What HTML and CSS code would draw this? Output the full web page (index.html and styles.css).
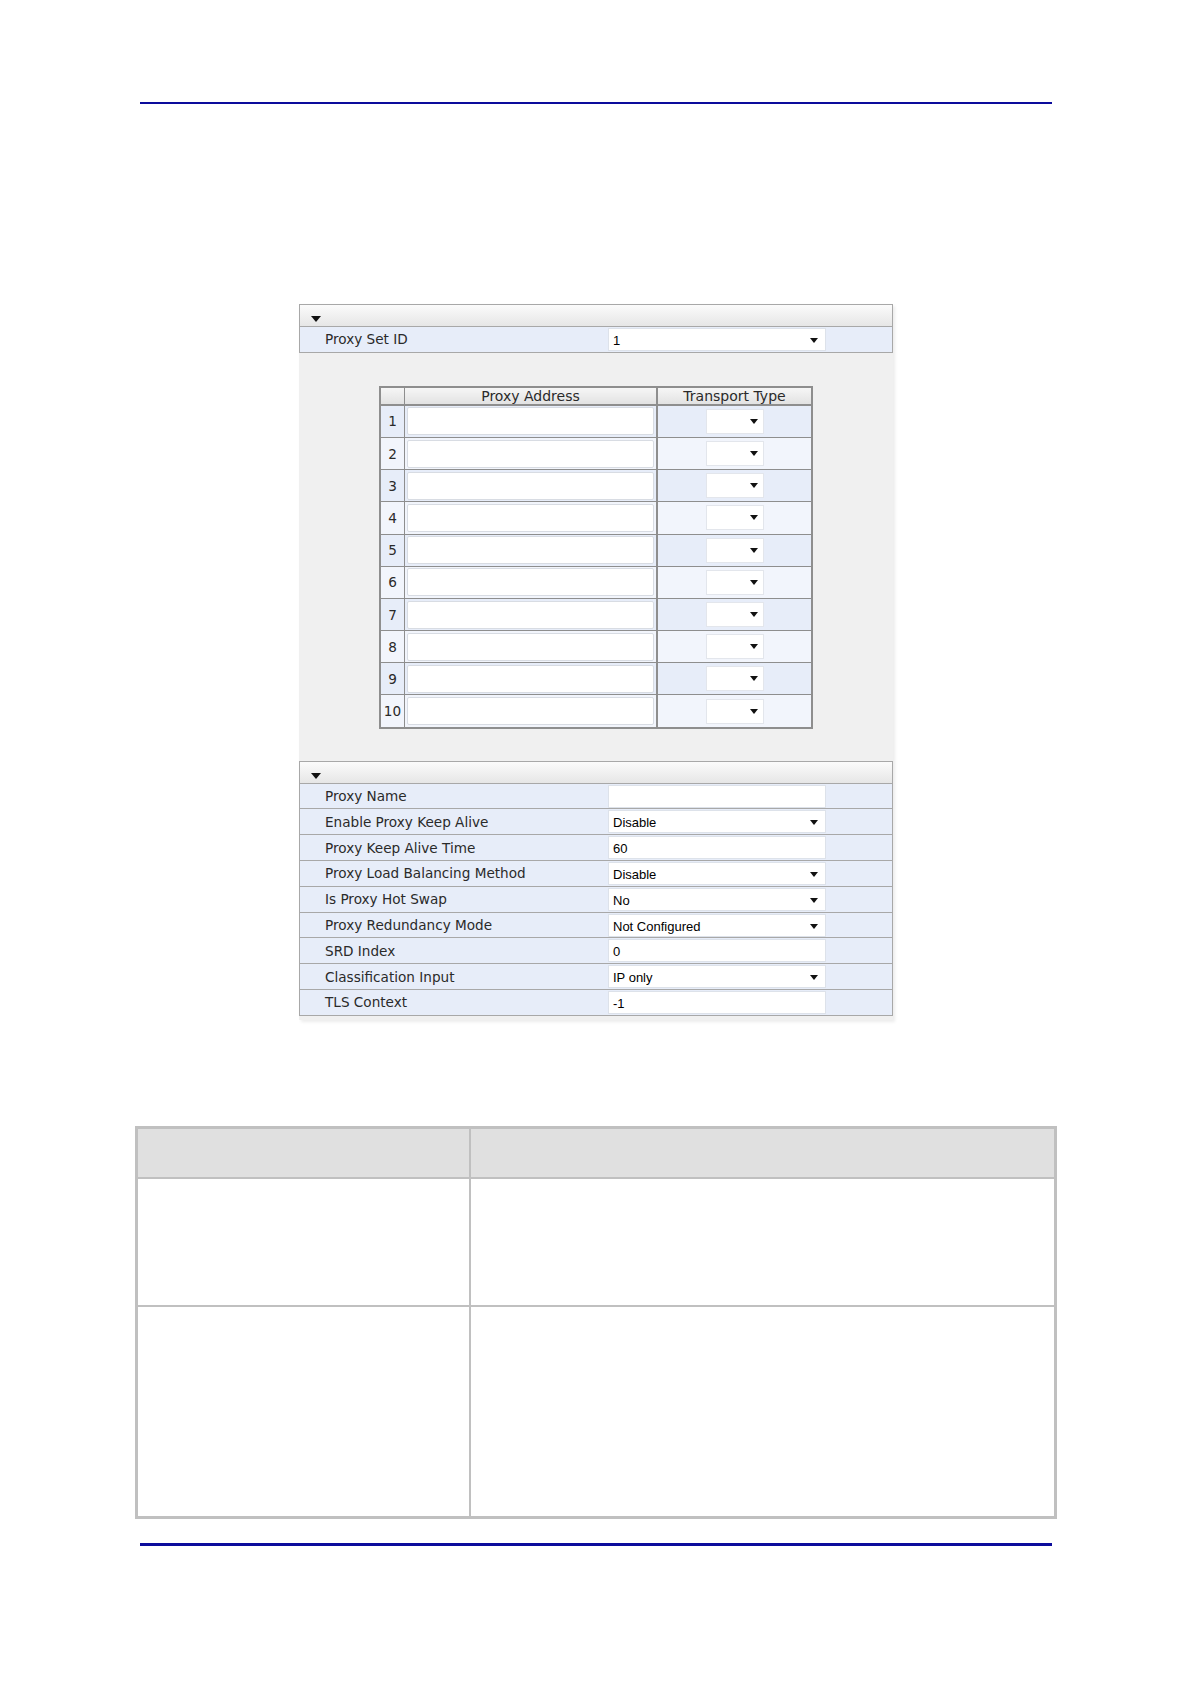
FILE: index.html
```html
<!DOCTYPE html>
<html lang="en">
  <head>
    <meta charset="UTF-8" />
    <title>Proxy Sets Table</title>
    <link rel="stylesheet" href="styles.css">
  </head>
  <body>
    <div class="page">
      <div class="rule-top"></div>

      <div class="form-area">
        <!-- Proxy set selector -->
        <div class="panel">
          <div class="panel-head"><span class="caret"></span></div>
          <div class="panel-row">
            <span class="label">Proxy Set ID</span>
            <span class="select">1<span class="arrow"></span></span>
          </div>
        </div>

        <div class="address-wrap">
          <table class="address-table">
            <thead>
              <tr>
                <th class="idx"></th>
                <th class="addr">Proxy Address</th>
                <th class="trans">Transport Type</th>
              </tr>
            </thead>
            <tbody id="addressRows"></tbody>
          </table>
        </div>

        <!-- Proxy set parameters -->
        <div class="panel">
          <div class="panel-head"><span class="caret"></span></div>
          <div class="panel-row"><span class="label">Proxy Name</span><span class="field"></span></div>
          <div class="panel-row"><span class="label">Enable Proxy Keep Alive</span><span class="select">Disable<span class="arrow"></span></span></div>
          <div class="panel-row"><span class="label">Proxy Keep Alive Time</span><span class="field">60</span></div>
          <div class="panel-row"><span class="label">Proxy Load Balancing Method</span><span class="select">Disable<span class="arrow"></span></span></div>
          <div class="panel-row"><span class="label">Is Proxy Hot Swap</span><span class="select">No<span class="arrow"></span></span></div>
          <div class="panel-row"><span class="label">Proxy Redundancy Mode</span><span class="select">Not Configured<span class="arrow"></span></span></div>
          <div class="panel-row"><span class="label">SRD Index</span><span class="field">0</span></div>
          <div class="panel-row"><span class="label">Classification Input</span><span class="select">IP only<span class="arrow"></span></span></div>
          <div class="panel-row"><span class="label">TLS Context</span><span class="field">-1</span></div>
        </div>
      </div>

      <table class="param-table">
        <tr class="param-head"><th class="col-a"></th><th></th></tr>
        <tr class="param-r1"><td></td><td></td></tr>
        <tr class="param-r2"><td></td><td></td></tr>
      </table>

      <div class="rule-bottom"></div>
    </div>

    <script>
      // build the 10 proxy address rows
      const rows = document.getElementById("addressRows");
      for (let i = 1; i <= 10; i++) {
        const tr = document.createElement("tr");
        tr.className = i % 2 === 1 ? "odd" : "even";
        tr.innerHTML =
          '<td class="idx">' + i + '</td>' +
          '<td class="addr"><span class="addr-input"></span></td>' +
          '<td class="trans"><span class="mini-select"><span class="arrow"></span></span></td>';
        rows.appendChild(tr);
      }
    </script>
  </body>
</html>
```

FILE: styles.css
```css
body {
  margin: 0;
  background-color: #ffffff;
  font-family: "DejaVu Sans", Verdana, sans-serif;
  color: #222;
}

.page {
  width: 1191px;
  padding-top: 102px;
  padding-bottom: 130px;
}

.rule-top {
  margin-left: 140px;
  width: 912px;
  border-top: 2px solid #0c0c9c;
}

.form-area {
  margin: 200px 0 0 299px;
  width: 594px;
  background-color: #f0f0f0;
  padding-bottom: 4px;
  box-shadow: 2px 2px 3px rgba(0, 0, 0, 0.08);
}

.panel {
  border: 1px solid #a8a8a8;
  background-color: #e7edf9;
}

.panel-head {
  height: 21px;
  background: linear-gradient(#fbfbfb, #e6e6e6);
  border-bottom: 1px solid #a8a8a8;
  position: relative;
}

.caret {
  position: absolute;
  left: 11px;
  top: 11px;
  border-left: 5px solid transparent;
  border-right: 5px solid transparent;
  border-top: 6px solid #111;
}

.panel-row {
  display: flex;
  align-items: center;
  height: 24.8px;
  border-bottom: 1px solid #a8a8a8;
}

.panel-row:last-child {
  border-bottom: none;
}

.label {
  width: 283px;
  padding-left: 25px;
  font-size: 13.6px;
  color: #2a2a2a;
}

.field,
.select {
  position: relative;
  box-sizing: border-box;
  width: 218px;
  height: 23px;
  line-height: 23px;
  padding-left: 4px;
  background-color: #fff;
  border: 1px solid #dde2ea;
  font-family: "Liberation Sans", Arial, sans-serif;
  font-size: 13px;
  color: #000;
}

.arrow {
  position: absolute;
  right: 7px;
  top: 9px;
  border-left: 4px solid transparent;
  border-right: 4px solid transparent;
  border-top: 5px solid #111;
}

.address-wrap {
  display: flex;
  justify-content: center;
  padding: 33px 0 32px;
}

.address-table {
  border-collapse: collapse;
  border: 2px solid #8e8e8e;
  font-size: 13.6px;
  color: #2a2a2a;
}

.address-table th {
  height: 15px;
  font-size: 14px;
  font-weight: normal;
  background: linear-gradient(#f6f6f6, #e2e2e2);
  border: 1px solid #8e8e8e;
  border-bottom: 2px solid #8e8e8e;
  padding: 0;
}

.address-table td {
  height: 31.2px;
  padding: 0;
  border-bottom: 1px solid #8e8e8e;
}

.address-table .idx {
  width: 23px;
  text-align: center;
  border-right: 1px solid #8e8e8e;
}

.address-table .addr {
  width: 251px;
  border-right: 2px solid #8e8e8e;
}

.address-table .trans {
  width: 153px;
  text-align: center;
}

.address-table tr.odd td {
  background-color: #e7edf9;
}

.address-table tr.even td {
  background-color: #f2f5fc;
}

.addr-input {
  display: block;
  height: 26px;
  margin: 0 2px;
  background-color: #fff;
  border: 1px solid #d8dce3;
  border-radius: 2px;
}

.mini-select {
  position: relative;
  display: inline-block;
  vertical-align: middle;
  width: 56px;
  height: 23px;
  background-color: #fff;
  border: 1px solid #e3e6ec;
}

.mini-select .arrow {
  right: 5px;
  top: 9px;
}

.param-table {
  margin: 106px 0 0 135px;
  width: 922px;
  border-collapse: collapse;
  border: 3px solid #c0c0c0;
}

.param-table th,
.param-table td {
  border: 2px solid #c0c0c0;
  padding: 0;
}

.param-table .col-a {
  width: 331px;
}

.param-head th {
  height: 48px;
  background-color: #e0e0e0;
}

.param-r1 td {
  height: 126px;
}

.param-r2 td {
  height: 209px;
}

.rule-bottom {
  margin: 24px 0 0 140px;
  width: 912px;
  border-top: 3px solid #0c0c9c;
}
```
